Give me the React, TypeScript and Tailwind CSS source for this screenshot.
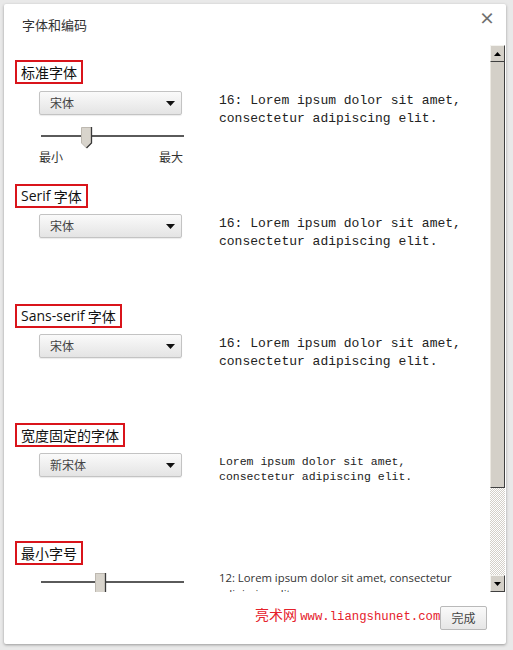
import React from "react";

const CJK = "'Noto Sans CJK SC', 'Noto Sans', sans-serif";

function Label({ children }: { children: React.ReactNode }) {
  return (
    <div className="ml-[11px] flex h-[24px] w-fit items-center border-2 border-[#d9141b] px-[4px] text-[14px] leading-[18px] text-[#111]">
      {children}
    </div>
  );
}

function Select({ value }: { value: string }) {
  return (
    <div className="flex h-[24px] w-[143px] shrink-0 items-center justify-between rounded-[2px] border border-[#c3c3c3] bg-gradient-to-b from-[#fafafa] to-[#e4e4e4] pl-[10px] pr-[6px] text-[12px] text-[#444] shadow-[0_1px_1px_rgba(0,0,0,0.08)]">
      <span>{value}</span>
      <svg width="9" height="5" viewBox="0 0 9 5">
        <path d="M0 0H9L4.5 5Z" fill="#111" />
      </svg>
    </div>
  );
}

function Slider({ pos, pointed }: { pos: number; pointed: boolean }) {
  return (
    <div className="relative h-[21px] w-[143px] shrink-0">
      <div className="absolute left-0 right-0 top-[8px] h-[2px] bg-[#5a5a5a]" />
      <svg
        className="absolute top-0"
        style={{ left: pos }}
        width="12"
        height="22"
        viewBox="0 0 12 22"
      >
        {pointed ? (
          <>
            <path d="M0.5 0.5H10.5V16L5.5 21L0.5 16Z" fill="#d8d4cc" stroke="#bdb8b0" />
            <path d="M10.5 0V16L5.5 21" fill="none" stroke="#3a3a3a" strokeWidth="1.3" />
          </>
        ) : (
          <>
            <rect x="0.5" y="0.5" width="10" height="20" fill="#d8d4cc" stroke="#bdb8b0" />
            <path d="M10.5 0V21" stroke="#3a3a3a" strokeWidth="1.3" />
          </>
        )}
      </svg>
    </div>
  );
}

function Preview({ small }: { small?: boolean }) {
  if (small) {
    return (
      <div className="ml-[37px] h-[24px] pt-[1px] font-['Liberation_Mono',monospace] text-[11.5px] leading-[15px] text-[#222]">
        <div>Lorem ipsum dolor sit amet,</div>
        <div>consectetur adipiscing elit.</div>
      </div>
    );
  }
  return (
    <div className="ml-[37px] h-[24px] pt-[1px] font-['Liberation_Mono',monospace] text-[13px] leading-[18px] text-[#222]">
      <div>16: Lorem ipsum dolor sit amet,</div>
      <div>consectetur adipiscing elit.</div>
    </div>
  );
}

function ScrollButton({ up }: { up: boolean }) {
  return (
    <div className="flex h-[17px] w-[15px] shrink-0 items-center justify-center border border-t-[#f4f3ef] border-l-[#f4f3ef] border-r-[#404040] border-b-[#404040] bg-[#d4d0c8]">
      <svg width="7" height="4" viewBox="0 0 7 4">
        {up ? <path d="M0 4H7L3.5 0Z" fill="#000" /> : <path d="M0 0H7L3.5 4Z" fill="#000" />}
      </svg>
    </div>
  );
}

export default function App() {
  return (
    <div
      className="h-[650px] w-[513px] overflow-hidden bg-[#e9e9e9] pl-[4px] pt-[4px]"
      style={{ fontFamily: CJK }}
    >
      <div className="relative flex h-[640px] w-[502px] flex-col rounded-[2px] bg-white shadow-[0_1px_3px_rgba(0,0,0,0.35)]">
        {/* header */}
        <div className="relative h-[40px] shrink-0 pl-[18px] pt-[13px] text-[13px] leading-[16px] text-[#333]">
          字体和编码
          <span className="absolute right-[11px] top-[5px] text-[16px] font-bold text-[#6f6f6f]">×</span>
        </div>

        {/* content + scrollbar */}
        <div className="flex h-[548px] shrink-0">
          <div className="w-[486px] overflow-hidden">
            {/* section 1 */}
            <div className="pt-[16px]">
              <Label>标准字体</Label>
            </div>
            <div className="mt-[7px] flex pl-[35px]">
              <Select value="宋体" />
              <Preview />
            </div>
            <div className="mt-[12px] flex pl-[37px]">
              <Slider pos={40} pointed />
            </div>
            <div className="mt-[2px] flex h-[14px] w-[179px] justify-between pl-[35px] text-[12px] leading-[14px] text-[#333]">
              <span>最小</span>
              <span>最大</span>
            </div>

            {/* section 2 */}
            <div className="mt-[20px]">
              <Label>
                <span className="font-['Open_Sans']">Serif</span>&nbsp;字体
              </Label>
            </div>
            <div className="mt-[6px] flex pl-[35px]">
              <Select value="宋体" />
              <Preview />
            </div>

            {/* section 3 */}
            <div className="mt-[66px]">
              <Label>
                <span className="font-['Open_Sans']">Sans-serif</span>&nbsp;字体
              </Label>
            </div>
            <div className="mt-[6px] flex pl-[35px]">
              <Select value="宋体" />
              <Preview />
            </div>

            {/* section 4 */}
            <div className="mt-[65px]">
              <Label>宽度固定的字体</Label>
            </div>
            <div className="mt-[6px] flex pl-[35px]">
              <Select value="新宋体" />
              <Preview small />
            </div>

            {/* section 5 */}
            <div className="mt-[64px]">
              <Label>最小字号</Label>
            </div>
            <div className="mt-[8px] flex pl-[37px]">
              <Slider pos={54} pointed={false} />
              <div className="ml-[35px] mt-[-3px] whitespace-nowrap font-['Open_Sans'] text-[11.3px] leading-[16px] text-[#333]">
                12: Lorem ipsum dolor sit amet, consectetur
                <br />
                adipiscing elit.
              </div>
            </div>
          </div>

          {/* scrollbar */}
          <div className="mt-[1px] flex h-[547px] w-[15px] flex-col">
            <ScrollButton up />
            <div className="h-[426px] shrink-0 border-r border-b border-r-[#404040] border-b-[#404040] border-l border-l-[#ece9e2] bg-[#d4d0c8]" />
            <div className="flex-1 bg-[repeating-conic-gradient(#d4d0c8_0%_25%,#ffffff_0%_50%)] bg-[length:2px_2px]" />
            <ScrollButton up={false} />
          </div>
        </div>

        {/* footer */}
        <div className="relative flex flex-1 items-start justify-end pr-[19px] pt-[14px]">
          <span className="absolute left-[251px] top-[13px] whitespace-nowrap text-[14px] leading-[18px] text-[#e5212b]">
            亮术网 <span className="font-['Liberation_Mono',monospace] text-[12.3px]">www.liangshunet.com</span>
          </span>
          <div className="relative flex h-[24px] w-[47px] items-center justify-center rounded-[2px] border border-[#b9b9b9] bg-gradient-to-b from-[#fafafa] to-[#e6e6e6] text-[12px] text-[#444]">
            完成
          </div>
        </div>
      </div>
    </div>
  );
}
